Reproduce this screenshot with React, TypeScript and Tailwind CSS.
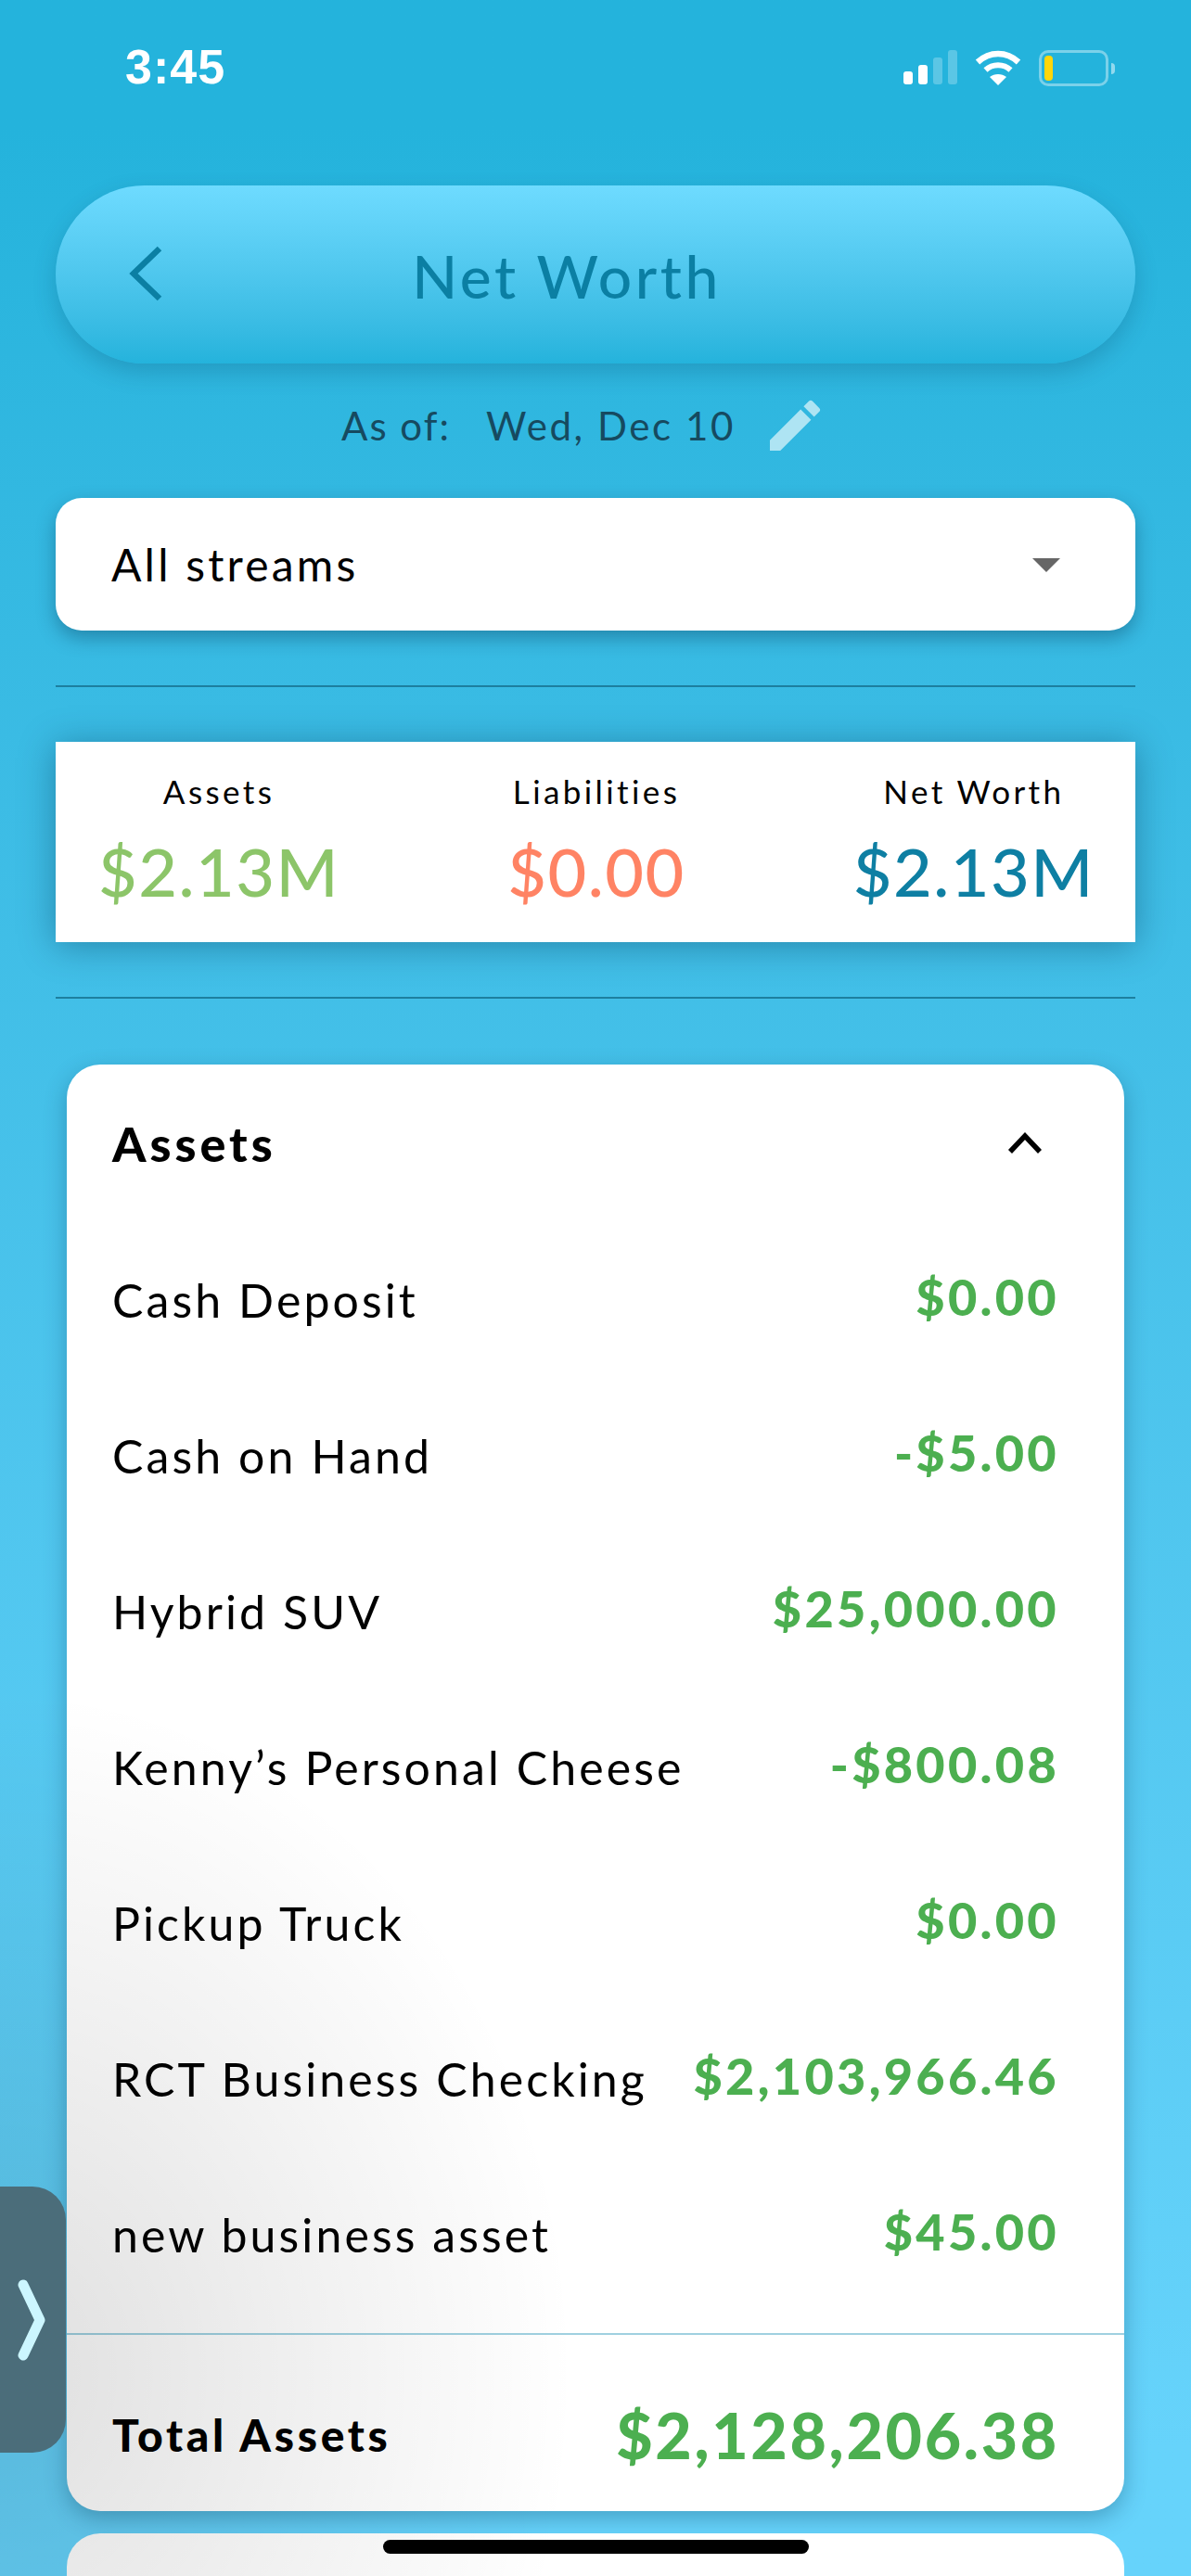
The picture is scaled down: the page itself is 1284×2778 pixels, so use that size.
const font = { fontFamily: '"Lato", "Noto Sans", sans-serif' };

const rows = [
  { name: 'Cash Deposit', value: '$0.00' },
  { name: 'Cash on Hand', value: '-$5.00' },
  { name: 'Hybrid SUV', value: '$25,000.00' },
  { name: 'Kenny’s Personal Cheese', value: '-$800.08' },
  { name: 'Pickup Truck', value: '$0.00' },
  { name: 'RCT Business Checking', value: '$2,103,966.46' },
  { name: 'new business asset', value: '$45.00' },
];

function StatusBar() {
  return (
    <div className="flex h-[200px] items-start justify-between pl-[135px] pr-[82px] pt-[46px]">
      <span className="font-['Liberation_Sans'] text-[52px] leading-[52px] font-bold tracking-[1px] text-white">3:45</span>
      <div className="flex items-start gap-[19px] pt-[8px]">
        <div className="flex h-[37px] items-end gap-[6px]">
          <div className="h-[14px] w-[10px] rounded-[3px] bg-white" />
          <div className="h-[21px] w-[10px] rounded-[3px] bg-white" />
          <div className="h-[29px] w-[10px] rounded-[3px] bg-white/25" />
          <div className="h-[37px] w-[10px] rounded-[3px] bg-white/25" />
        </div>
        <svg width="50" height="38" viewBox="0 0 50 38" fill="none">
          <path d="M3 13 C16 1 34 1 47 13" stroke="white" strokeWidth="6.5" />
          <path d="M11.5 21.5 C19 14.5 31 14.5 38.5 21.5" stroke="white" strokeWidth="6" />
          <path d="M25 38 L16 29 C21 25 29 25 34 29 Z" fill="white" />
        </svg>
        <div className="flex items-center gap-[3px]">
          <div className="h-[39px] w-[75px] rounded-[10px] border-[3px] border-white/40 p-[3px]">
            <div className="h-full w-[9px] rounded-[4px] bg-[#ffd60a]" />
          </div>
          <div className="h-[12px] w-[4px] rounded-r-full bg-white/50" />
        </div>
      </div>
    </div>
  );
}

function Header() {
  return (
    <div className="relative mx-[60px] flex h-[192px] items-center justify-center rounded-[96px] bg-gradient-to-b from-[#6edbff] to-[#24b3dc] pr-[62px] pt-[4px] shadow-[0_10px_24px_rgba(0,60,90,0.22)]">
      <svg className="absolute left-[76px] top-[64px]" width="42" height="62" viewBox="0 0 42 62" fill="none">
        <path d="M36 4 L8 31 L36 58" stroke="#0b7fa3" strokeWidth="6.5" />
      </svg>
      <span className="text-[64px] leading-none font-medium tracking-[3.5px] text-[#0b7fa3]">Net Worth</span>
    </div>
  );
}

function AsOf() {
  return (
    <div className="flex h-[145px] items-center pb-[12px] pl-[368px]">
      <span className="text-[42px] leading-none tracking-[2px] text-[#164a60]">As of:</span>
      <span className="ml-[38px] text-[42px] leading-none tracking-[2.6px] text-[#164a60]">Wed, Dec 10</span>
      <svg className="ml-[28px]" width="72" height="72" viewBox="0 0 24 24" fill="#aee4f3">
        <path d="M3 17.25V21h3.75L17.81 9.94l-3.75-3.75L3 17.25zM20.71 7.04a1 1 0 0 0 0-1.41l-2.34-2.34a1 1 0 0 0-1.41 0l-1.83 1.83 3.75 3.75 1.83-1.83z" />
      </svg>
    </div>
  );
}

function StreamSelect() {
  return (
    <div className="mx-[60px] flex h-[143px] items-center justify-between rounded-[28px] bg-white pl-[60px] pr-[81px] shadow-[0_8px_20px_rgba(0,40,70,0.35)]">
      <span className="text-[48px] leading-none tracking-[3.2px] text-black">All streams</span>
      <div className="mt-[2px] h-0 w-0 border-x-[15px] border-t-[15px] border-x-transparent border-t-[#666666]" />
    </div>
  );
}

function Summary() {
  const cols = [
    { label: 'Assets', value: '$2.13M', color: 'text-[#8cc569]' },
    { label: 'Liabilities', value: '$0.00', color: 'text-[#ff8364]' },
    { label: 'Net Worth', value: '$2.13M', color: 'text-[#0e7fa3]' },
  ];
  return (
    <div className="mx-[60px] flex h-[216px] items-start justify-between bg-white pl-[46px] pr-[44px] pt-[35px] shadow-[0_4px_36px_rgba(0,50,80,0.4)]">
      {cols.map((c) => (
        <div key={c.label} className="flex flex-col items-center">
          <span className="text-[35px] leading-[36px] tracking-[3.4px] text-black">{c.label}</span>
          <span className={`mt-[28px] text-[72px] leading-[80px] font-medium tracking-[1.5px] ${c.color}`}>{c.value}</span>
        </div>
      ))}
    </div>
  );
}

function AssetsCard() {
  return (
    <div className="mx-[72px] mt-[71px] h-[1560px] rounded-[36px] bg-white shadow-[0_8px_24px_rgba(0,50,80,0.3)]">
      <div className="flex h-[170px] items-center justify-between pl-[49px] pr-[88px]">
        <span className="text-[52px] leading-none font-black tracking-[4px] text-black">Assets</span>
        <svg width="38" height="24" viewBox="0 0 38 24" fill="none">
          <path d="M3 21 L19 4 L35 21" stroke="black" strokeWidth="5.5" />
        </svg>
      </div>
      <div className="flex flex-col">
        {rows.map((r) => (
          <div key={r.name} className="flex h-[168px] items-center justify-between pl-[49px] pr-[70px]">
            <span className="text-[50px] leading-none tracking-[3.1px] text-black">{r.name}</span>
            <span className="pb-[6px] text-[54px] leading-none font-black tracking-[3.3px] text-[#4caf50]">{r.value}</span>
          </div>
        ))}
      </div>
      <div className="mt-[22px] flex h-[192px] items-center justify-between border-t-[2px] border-[#9fd0e0] pl-[49px] pr-[70px] pt-[26px]">
        <span className="text-[48px] leading-none font-black tracking-[3.7px] text-black">Total Assets</span>
        <span className="text-[68px] leading-none font-black tracking-[2.7px] text-[#4caf50]">$2,128,206.38</span>
      </div>
    </div>
  );
}

export default function App() {
  return (
    <div style={font} className="relative h-[2778px] w-[1284px] overflow-hidden bg-gradient-to-b from-[#24b3dc] from-[5%] to-[#66d3fb] to-[95%]">
      <StatusBar />
      <Header />
      <AsOf />
      <StreamSelect />
      <div className="mx-[60px] mb-[59px] mt-[59px] h-[2px] bg-[#1d7f9f]" />
      <Summary />
      <div className="mx-[60px] mt-[59px] h-[2px] bg-[#1d7f9f]" />
      <AssetsCard />
      <div className="mx-[72px] mt-[24px] h-[100px] rounded-t-[36px] bg-white" />

      {/* shade the drawer handle throws over the page */}
      <div className="pointer-events-none absolute inset-0 bg-[radial-gradient(ellipse_620px_740px_at_0px_2560px,rgba(0,0,0,0.125),transparent)]" />

      {/* side drawer handle */}
      <div className="absolute left-0 top-[2358px] flex h-[287px] w-[71px] items-center justify-center rounded-r-[36px] bg-[#4b6d7a]">
        <svg width="34" height="88" viewBox="0 0 34 88" fill="none">
          <path d="M6 6 L24 44 L6 82" stroke="#ccf6ff" strokeWidth="11" strokeLinecap="round" strokeLinejoin="round" />
        </svg>
      </div>

      {/* home indicator */}
      <div className="absolute left-[413px] top-[2739px] h-[15px] w-[459px] rounded-full bg-black" />
    </div>
  );
}
